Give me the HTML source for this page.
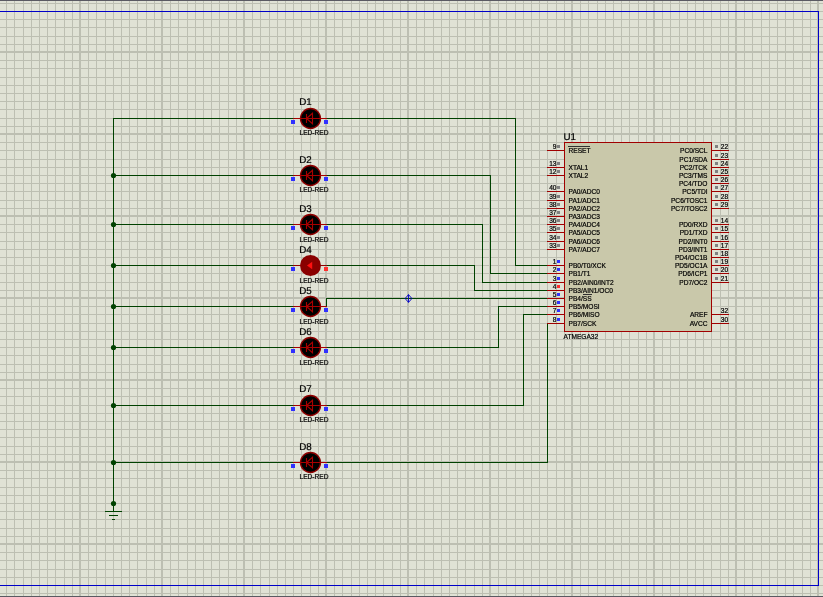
<!DOCTYPE html><html><head><meta charset="utf-8"><style>html,body{margin:0;padding:0;background:#e0e2d5;width:823px;height:597px;overflow:hidden}svg{display:block}text{font-family:"Liberation Sans",sans-serif}svg{will-change:transform}text{stroke:#000;stroke-width:0.2px}</style></head><body>
<svg width="823" height="597" viewBox="0 0 823 597">
<rect x="0" y="0" width="823" height="597" fill="#e0e2d5"/>
<g fill="#bdbfb2" shape-rendering="crispEdges"><rect x="-3" y="0" width="2" height="597"/><rect x="6" y="0" width="1" height="597"/><rect x="14" y="0" width="1" height="597"/><rect x="23" y="0" width="1" height="597"/><rect x="31" y="0" width="1" height="597"/><rect x="39" y="0" width="1" height="597"/><rect x="47" y="0" width="1" height="597"/><rect x="55" y="0" width="1" height="597"/><rect x="64" y="0" width="1" height="597"/><rect x="72" y="0" width="1" height="597"/><rect x="79" y="0" width="2" height="597"/><rect x="88" y="0" width="1" height="597"/><rect x="96" y="0" width="1" height="597"/><rect x="105" y="0" width="1" height="597"/><rect x="113" y="0" width="1" height="597"/><rect x="121" y="0" width="1" height="597"/><rect x="129" y="0" width="1" height="597"/><rect x="137" y="0" width="1" height="597"/><rect x="146" y="0" width="1" height="597"/><rect x="154" y="0" width="1" height="597"/><rect x="161" y="0" width="2" height="597"/><rect x="170" y="0" width="1" height="597"/><rect x="178" y="0" width="1" height="597"/><rect x="187" y="0" width="1" height="597"/><rect x="195" y="0" width="1" height="597"/><rect x="203" y="0" width="1" height="597"/><rect x="211" y="0" width="1" height="597"/><rect x="219" y="0" width="1" height="597"/><rect x="228" y="0" width="1" height="597"/><rect x="236" y="0" width="1" height="597"/><rect x="243" y="0" width="2" height="597"/><rect x="252" y="0" width="1" height="597"/><rect x="260" y="0" width="1" height="597"/><rect x="269" y="0" width="1" height="597"/><rect x="277" y="0" width="1" height="597"/><rect x="285" y="0" width="1" height="597"/><rect x="293" y="0" width="1" height="597"/><rect x="301" y="0" width="1" height="597"/><rect x="310" y="0" width="1" height="597"/><rect x="318" y="0" width="1" height="597"/><rect x="325" y="0" width="2" height="597"/><rect x="334" y="0" width="1" height="597"/><rect x="342" y="0" width="1" height="597"/><rect x="351" y="0" width="1" height="597"/><rect x="359" y="0" width="1" height="597"/><rect x="367" y="0" width="1" height="597"/><rect x="375" y="0" width="1" height="597"/><rect x="383" y="0" width="1" height="597"/><rect x="392" y="0" width="1" height="597"/><rect x="400" y="0" width="1" height="597"/><rect x="407" y="0" width="2" height="597"/><rect x="416" y="0" width="1" height="597"/><rect x="424" y="0" width="1" height="597"/><rect x="433" y="0" width="1" height="597"/><rect x="441" y="0" width="1" height="597"/><rect x="449" y="0" width="1" height="597"/><rect x="457" y="0" width="1" height="597"/><rect x="465" y="0" width="1" height="597"/><rect x="474" y="0" width="1" height="597"/><rect x="482" y="0" width="1" height="597"/><rect x="489" y="0" width="2" height="597"/><rect x="498" y="0" width="1" height="597"/><rect x="506" y="0" width="1" height="597"/><rect x="515" y="0" width="1" height="597"/><rect x="523" y="0" width="1" height="597"/><rect x="531" y="0" width="1" height="597"/><rect x="539" y="0" width="1" height="597"/><rect x="547" y="0" width="1" height="597"/><rect x="556" y="0" width="1" height="597"/><rect x="564" y="0" width="1" height="597"/><rect x="571" y="0" width="2" height="597"/><rect x="580" y="0" width="1" height="597"/><rect x="588" y="0" width="1" height="597"/><rect x="597" y="0" width="1" height="597"/><rect x="605" y="0" width="1" height="597"/><rect x="613" y="0" width="1" height="597"/><rect x="621" y="0" width="1" height="597"/><rect x="629" y="0" width="1" height="597"/><rect x="638" y="0" width="1" height="597"/><rect x="646" y="0" width="1" height="597"/><rect x="653" y="0" width="2" height="597"/><rect x="662" y="0" width="1" height="597"/><rect x="670" y="0" width="1" height="597"/><rect x="679" y="0" width="1" height="597"/><rect x="687" y="0" width="1" height="597"/><rect x="695" y="0" width="1" height="597"/><rect x="703" y="0" width="1" height="597"/><rect x="711" y="0" width="1" height="597"/><rect x="720" y="0" width="1" height="597"/><rect x="728" y="0" width="1" height="597"/><rect x="735" y="0" width="2" height="597"/><rect x="744" y="0" width="1" height="597"/><rect x="752" y="0" width="1" height="597"/><rect x="761" y="0" width="1" height="597"/><rect x="769" y="0" width="1" height="597"/><rect x="777" y="0" width="1" height="597"/><rect x="785" y="0" width="1" height="597"/><rect x="793" y="0" width="1" height="597"/><rect x="802" y="0" width="1" height="597"/><rect x="810" y="0" width="1" height="597"/><rect x="817" y="0" width="2" height="597"/><rect x="826" y="0" width="1" height="597"/><rect x="0" y="-5" width="823" height="1"/><rect x="0" y="3" width="823" height="1"/><rect x="0" y="11" width="823" height="1"/><rect x="0" y="19" width="823" height="1"/><rect x="0" y="27" width="823" height="1"/><rect x="0" y="36" width="823" height="1"/><rect x="0" y="44" width="823" height="1"/><rect x="0" y="51" width="823" height="2"/><rect x="0" y="60" width="823" height="1"/><rect x="0" y="68" width="823" height="1"/><rect x="0" y="77" width="823" height="1"/><rect x="0" y="85" width="823" height="1"/><rect x="0" y="93" width="823" height="1"/><rect x="0" y="101" width="823" height="1"/><rect x="0" y="109" width="823" height="1"/><rect x="0" y="118" width="823" height="1"/><rect x="0" y="126" width="823" height="1"/><rect x="0" y="133" width="823" height="2"/><rect x="0" y="142" width="823" height="1"/><rect x="0" y="150" width="823" height="1"/><rect x="0" y="159" width="823" height="1"/><rect x="0" y="167" width="823" height="1"/><rect x="0" y="175" width="823" height="1"/><rect x="0" y="183" width="823" height="1"/><rect x="0" y="191" width="823" height="1"/><rect x="0" y="200" width="823" height="1"/><rect x="0" y="208" width="823" height="1"/><rect x="0" y="215" width="823" height="2"/><rect x="0" y="224" width="823" height="1"/><rect x="0" y="232" width="823" height="1"/><rect x="0" y="241" width="823" height="1"/><rect x="0" y="249" width="823" height="1"/><rect x="0" y="257" width="823" height="1"/><rect x="0" y="265" width="823" height="1"/><rect x="0" y="273" width="823" height="1"/><rect x="0" y="282" width="823" height="1"/><rect x="0" y="290" width="823" height="1"/><rect x="0" y="297" width="823" height="2"/><rect x="0" y="306" width="823" height="1"/><rect x="0" y="314" width="823" height="1"/><rect x="0" y="323" width="823" height="1"/><rect x="0" y="331" width="823" height="1"/><rect x="0" y="339" width="823" height="1"/><rect x="0" y="347" width="823" height="1"/><rect x="0" y="355" width="823" height="1"/><rect x="0" y="364" width="823" height="1"/><rect x="0" y="372" width="823" height="1"/><rect x="0" y="379" width="823" height="2"/><rect x="0" y="388" width="823" height="1"/><rect x="0" y="396" width="823" height="1"/><rect x="0" y="405" width="823" height="1"/><rect x="0" y="413" width="823" height="1"/><rect x="0" y="421" width="823" height="1"/><rect x="0" y="429" width="823" height="1"/><rect x="0" y="437" width="823" height="1"/><rect x="0" y="446" width="823" height="1"/><rect x="0" y="454" width="823" height="1"/><rect x="0" y="461" width="823" height="2"/><rect x="0" y="470" width="823" height="1"/><rect x="0" y="478" width="823" height="1"/><rect x="0" y="487" width="823" height="1"/><rect x="0" y="495" width="823" height="1"/><rect x="0" y="503" width="823" height="1"/><rect x="0" y="511" width="823" height="1"/><rect x="0" y="519" width="823" height="1"/><rect x="0" y="528" width="823" height="1"/><rect x="0" y="536" width="823" height="1"/><rect x="0" y="543" width="823" height="2"/><rect x="0" y="552" width="823" height="1"/><rect x="0" y="560" width="823" height="1"/><rect x="0" y="569" width="823" height="1"/><rect x="0" y="577" width="823" height="1"/><rect x="0" y="585" width="823" height="1"/><rect x="0" y="593" width="823" height="1"/><rect x="0" y="601" width="823" height="1"/></g>
<g fill="#0000c8" shape-rendering="crispEdges">
<rect x="0" y="11" width="819" height="1"/>
<rect x="0" y="585" width="819" height="1"/>
<rect x="818" y="11" width="1" height="575"/>
</g>
<rect x="0" y="0" width="823" height="1" fill="#5a5a62"/>
<rect x="0" y="596" width="823" height="1" fill="#5a5a62"/>
<g shape-rendering="crispEdges"><rect x="113" y="118" width="1" height="386" fill="#004200"/><rect x="113" y="118" width="181" height="1" fill="#004200"/><rect x="113" y="175" width="181" height="1" fill="#004200"/><rect x="113" y="224" width="181" height="1" fill="#004200"/><rect x="113" y="265" width="181" height="1" fill="#004200"/><rect x="113" y="306" width="181" height="1" fill="#004200"/><rect x="113" y="347" width="181" height="1" fill="#004200"/><rect x="113" y="405" width="181" height="1" fill="#004200"/><rect x="113" y="462" width="181" height="1" fill="#004200"/><rect x="326" y="118" width="190" height="1" fill="#004200"/><rect x="515" y="118" width="1" height="148" fill="#004200"/><rect x="515" y="265" width="33" height="1" fill="#004200"/><rect x="326" y="175" width="165" height="1" fill="#004200"/><rect x="490" y="175" width="1" height="99" fill="#004200"/><rect x="490" y="273" width="58" height="1" fill="#004200"/><rect x="326" y="224" width="157" height="1" fill="#004200"/><rect x="482" y="224" width="1" height="59" fill="#004200"/><rect x="482" y="282" width="66" height="1" fill="#004200"/><rect x="326" y="265" width="149" height="1" fill="#004200"/><rect x="474" y="265" width="1" height="26" fill="#004200"/><rect x="474" y="290" width="74" height="1" fill="#004200"/><rect x="326" y="298" width="1" height="9" fill="#004200"/><rect x="326" y="298" width="222" height="1" fill="#004200"/><rect x="326" y="347" width="173" height="1" fill="#004200"/><rect x="498" y="306" width="1" height="42" fill="#004200"/><rect x="498" y="306" width="50" height="1" fill="#004200"/><rect x="326" y="405" width="198" height="1" fill="#004200"/><rect x="523" y="314" width="1" height="92" fill="#004200"/><rect x="523" y="314" width="25" height="1" fill="#004200"/><rect x="326" y="462" width="222" height="1" fill="#004200"/><rect x="547" y="323" width="1" height="140" fill="#004200"/><rect x="547" y="323" width="1" height="1" fill="#004200"/></g>
<circle cx="113.5" cy="175.5" r="2.6" fill="#004200"/>
<circle cx="113.5" cy="224.5" r="2.6" fill="#004200"/>
<circle cx="113.5" cy="265.5" r="2.6" fill="#004200"/>
<circle cx="113.5" cy="306.5" r="2.6" fill="#004200"/>
<circle cx="113.5" cy="347.5" r="2.6" fill="#004200"/>
<circle cx="113.5" cy="405.5" r="2.6" fill="#004200"/>
<circle cx="113.5" cy="462.5" r="2.6" fill="#004200"/>
<circle cx="113.5" cy="503.5" r="2.6" fill="#004200"/>
<g shape-rendering="crispEdges" fill="#004200">
<rect x="113" y="503" width="1" height="8"/>
<rect x="105" y="511" width="17" height="1"/>
<rect x="109" y="515" width="9" height="1"/>
<rect x="112" y="519" width="3" height="1"/>
</g>
<g fill="none" stroke="#0000c8" stroke-width="0.9"><path d="M408.5 294.6 L411.9 298.5 L408.5 302.4 L405.1 298.5 Z M408.5 294.6 V302.4"/></g>
<rect x="293" y="118" width="34" height="1" fill="#900000" shape-rendering="crispEdges"/>
<circle cx="310.5" cy="118.5" r="10" fill="#000000" stroke="#8e0000" stroke-width="1.3"/>
<path d="M306.5 114.0 V123.0 M306.5 118.5 L312.5 113.3 V123.7 Z M295 118.5 H326" fill="none" stroke="#a80000" stroke-width="1.1"/>
<rect x="291" y="120" width="4" height="4" fill="#3030ff" shape-rendering="crispEdges"/>
<rect x="324" y="120" width="4" height="4" fill="#3030ff" shape-rendering="crispEdges"/>
<text x="299.3" y="105.0" font-size="9.8" text-rendering="geometricPrecision" fill="#000000">D1</text>
<text x="299.5" y="135.0" font-size="6.6" fill="#000000">LED-RED</text>
<rect x="293" y="175" width="34" height="1" fill="#900000" shape-rendering="crispEdges"/>
<circle cx="310.5" cy="175.5" r="10" fill="#000000" stroke="#8e0000" stroke-width="1.3"/>
<path d="M306.5 171.0 V180.0 M306.5 175.5 L312.5 170.3 V180.7 Z M295 175.5 H326" fill="none" stroke="#a80000" stroke-width="1.1"/>
<rect x="291" y="177" width="4" height="4" fill="#3030ff" shape-rendering="crispEdges"/>
<rect x="324" y="177" width="4" height="4" fill="#3030ff" shape-rendering="crispEdges"/>
<text x="299.3" y="163.0" font-size="9.8" text-rendering="geometricPrecision" fill="#000000">D2</text>
<text x="299.5" y="192.0" font-size="6.6" fill="#000000">LED-RED</text>
<rect x="293" y="224" width="34" height="1" fill="#900000" shape-rendering="crispEdges"/>
<circle cx="310.5" cy="224.5" r="10" fill="#000000" stroke="#8e0000" stroke-width="1.3"/>
<path d="M306.5 220.0 V229.0 M306.5 224.5 L312.5 219.3 V229.7 Z M295 224.5 H326" fill="none" stroke="#a80000" stroke-width="1.1"/>
<rect x="291" y="226" width="4" height="4" fill="#3030ff" shape-rendering="crispEdges"/>
<rect x="324" y="226" width="4" height="4" fill="#3030ff" shape-rendering="crispEdges"/>
<text x="299.3" y="212.0" font-size="9.8" text-rendering="geometricPrecision" fill="#000000">D3</text>
<text x="299.5" y="242.0" font-size="6.6" fill="#000000">LED-RED</text>
<rect x="293" y="265" width="34" height="1" fill="#900000" shape-rendering="crispEdges"/>
<circle cx="310.5" cy="265.5" r="10.5" fill="#8a0000"/>
<path d="M307 265.5 L312.2 261.7 L312.2 269.3 Z" fill="#ff1010"/>
<rect x="291" y="267" width="4" height="4" fill="#3030ff" shape-rendering="crispEdges"/>
<rect x="324" y="267" width="4" height="4" fill="#ff3030" shape-rendering="crispEdges"/>
<text x="299.3" y="253.0" font-size="9.8" text-rendering="geometricPrecision" fill="#000000">D4</text>
<text x="299.5" y="283.0" font-size="6.6" fill="#000000">LED-RED</text>
<rect x="293" y="306" width="34" height="1" fill="#900000" shape-rendering="crispEdges"/>
<circle cx="310.5" cy="306.5" r="10" fill="#000000" stroke="#8e0000" stroke-width="1.3"/>
<path d="M306.5 302.0 V311.0 M306.5 306.5 L312.5 301.3 V311.7 Z M295 306.5 H326" fill="none" stroke="#a80000" stroke-width="1.1"/>
<rect x="291" y="308" width="4" height="4" fill="#3030ff" shape-rendering="crispEdges"/>
<rect x="324" y="308" width="4" height="4" fill="#3030ff" shape-rendering="crispEdges"/>
<text x="299.3" y="294.0" font-size="9.8" text-rendering="geometricPrecision" fill="#000000">D5</text>
<text x="299.5" y="324.0" font-size="6.6" fill="#000000">LED-RED</text>
<rect x="293" y="347" width="34" height="1" fill="#900000" shape-rendering="crispEdges"/>
<circle cx="310.5" cy="347.5" r="10" fill="#000000" stroke="#8e0000" stroke-width="1.3"/>
<path d="M306.5 343.0 V352.0 M306.5 347.5 L312.5 342.3 V352.7 Z M295 347.5 H326" fill="none" stroke="#a80000" stroke-width="1.1"/>
<rect x="291" y="349" width="4" height="4" fill="#3030ff" shape-rendering="crispEdges"/>
<rect x="324" y="349" width="4" height="4" fill="#3030ff" shape-rendering="crispEdges"/>
<text x="299.3" y="335.0" font-size="9.8" text-rendering="geometricPrecision" fill="#000000">D6</text>
<text x="299.5" y="365.0" font-size="6.6" fill="#000000">LED-RED</text>
<rect x="293" y="405" width="34" height="1" fill="#900000" shape-rendering="crispEdges"/>
<circle cx="310.5" cy="405.5" r="10" fill="#000000" stroke="#8e0000" stroke-width="1.3"/>
<path d="M306.5 401.0 V410.0 M306.5 405.5 L312.5 400.3 V410.7 Z M295 405.5 H326" fill="none" stroke="#a80000" stroke-width="1.1"/>
<rect x="291" y="407" width="4" height="4" fill="#3030ff" shape-rendering="crispEdges"/>
<rect x="324" y="407" width="4" height="4" fill="#3030ff" shape-rendering="crispEdges"/>
<text x="299.3" y="392.0" font-size="9.8" text-rendering="geometricPrecision" fill="#000000">D7</text>
<text x="299.5" y="422.0" font-size="6.6" fill="#000000">LED-RED</text>
<rect x="293" y="462" width="34" height="1" fill="#900000" shape-rendering="crispEdges"/>
<circle cx="310.5" cy="462.5" r="10" fill="#000000" stroke="#8e0000" stroke-width="1.3"/>
<path d="M306.5 458.0 V467.0 M306.5 462.5 L312.5 457.3 V467.7 Z M295 462.5 H326" fill="none" stroke="#a80000" stroke-width="1.1"/>
<rect x="291" y="464" width="4" height="4" fill="#3030ff" shape-rendering="crispEdges"/>
<rect x="324" y="464" width="4" height="4" fill="#3030ff" shape-rendering="crispEdges"/>
<text x="299.3" y="450.0" font-size="9.8" text-rendering="geometricPrecision" fill="#000000">D8</text>
<text x="299.5" y="479.0" font-size="6.6" fill="#000000">LED-RED</text>
<rect x="564.5" y="142.5" width="147" height="189" fill="#c9c8aa" stroke="#a00000" stroke-width="1"/>
<text x="563.5" y="140" font-size="9.8" text-rendering="geometricPrecision" fill="#000000">U1</text>
<text x="563.5" y="338.5" font-size="6.6" fill="#000000">ATMEGA32</text>
<g shape-rendering="crispEdges"><rect x="547" y="150" width="17" height="1" fill="#a00000"/><rect x="557" y="145" width="3" height="3" fill="#808080"/><text x="556.5" y="149.0" font-size="6.6" text-anchor="end" fill="#000000">9</text><text x="568.5" y="152.5" font-size="6.6" fill="#000000">RESET</text><rect x="547" y="167" width="17" height="1" fill="#a00000"/><rect x="557" y="162" width="3" height="3" fill="#808080"/><text x="556.5" y="166.0" font-size="6.6" text-anchor="end" fill="#000000">13</text><text x="568.5" y="169.5" font-size="6.6" fill="#000000">XTAL1</text><rect x="547" y="175" width="17" height="1" fill="#a00000"/><rect x="557" y="170" width="3" height="3" fill="#808080"/><text x="556.5" y="174.0" font-size="6.6" text-anchor="end" fill="#000000">12</text><text x="568.5" y="177.5" font-size="6.6" fill="#000000">XTAL2</text><rect x="547" y="191" width="17" height="1" fill="#a00000"/><rect x="557" y="186" width="3" height="3" fill="#808080"/><text x="556.5" y="190.0" font-size="6.6" text-anchor="end" fill="#000000">40</text><text x="568.5" y="193.5" font-size="6.6" fill="#000000">PA0/ADC0</text><rect x="547" y="200" width="17" height="1" fill="#a00000"/><rect x="557" y="195" width="3" height="3" fill="#808080"/><text x="556.5" y="199.0" font-size="6.6" text-anchor="end" fill="#000000">39</text><text x="568.5" y="202.5" font-size="6.6" fill="#000000">PA1/ADC1</text><rect x="547" y="208" width="17" height="1" fill="#a00000"/><rect x="557" y="203" width="3" height="3" fill="#808080"/><text x="556.5" y="207.0" font-size="6.6" text-anchor="end" fill="#000000">38</text><text x="568.5" y="210.5" font-size="6.6" fill="#000000">PA2/ADC2</text><rect x="547" y="216" width="17" height="1" fill="#a00000"/><rect x="557" y="211" width="3" height="3" fill="#808080"/><text x="556.5" y="215.0" font-size="6.6" text-anchor="end" fill="#000000">37</text><text x="568.5" y="218.5" font-size="6.6" fill="#000000">PA3/ADC3</text><rect x="547" y="224" width="17" height="1" fill="#a00000"/><rect x="557" y="219" width="3" height="3" fill="#808080"/><text x="556.5" y="223.0" font-size="6.6" text-anchor="end" fill="#000000">36</text><text x="568.5" y="226.5" font-size="6.6" fill="#000000">PA4/ADC4</text><rect x="547" y="232" width="17" height="1" fill="#a00000"/><rect x="557" y="227" width="3" height="3" fill="#808080"/><text x="556.5" y="231.0" font-size="6.6" text-anchor="end" fill="#000000">35</text><text x="568.5" y="234.5" font-size="6.6" fill="#000000">PA5/ADC5</text><rect x="547" y="241" width="17" height="1" fill="#a00000"/><rect x="557" y="236" width="3" height="3" fill="#808080"/><text x="556.5" y="240.0" font-size="6.6" text-anchor="end" fill="#000000">34</text><text x="568.5" y="243.5" font-size="6.6" fill="#000000">PA6/ADC6</text><rect x="547" y="249" width="17" height="1" fill="#a00000"/><rect x="557" y="244" width="3" height="3" fill="#808080"/><text x="556.5" y="248.0" font-size="6.6" text-anchor="end" fill="#000000">33</text><text x="568.5" y="251.5" font-size="6.6" fill="#000000">PA7/ADC7</text><rect x="547" y="265" width="17" height="1" fill="#a00000"/><rect x="557" y="260" width="3" height="3" fill="#3030ff"/><text x="556.5" y="264.0" font-size="6.6" text-anchor="end" fill="#000000">1</text><text x="568.5" y="267.5" font-size="6.6" fill="#000000">PB0/T0/XCK</text><rect x="547" y="273" width="17" height="1" fill="#a00000"/><rect x="557" y="268" width="3" height="3" fill="#3030ff"/><text x="556.5" y="272.0" font-size="6.6" text-anchor="end" fill="#000000">2</text><text x="568.5" y="275.5" font-size="6.6" fill="#000000">PB1/T1</text><rect x="547" y="282" width="17" height="1" fill="#a00000"/><rect x="557" y="277" width="3" height="3" fill="#3030ff"/><text x="556.5" y="281.0" font-size="6.6" text-anchor="end" fill="#000000">3</text><text x="568.5" y="284.5" font-size="6.6" fill="#000000">PB2/AIN0/INT2</text><rect x="547" y="290" width="17" height="1" fill="#a00000"/><rect x="557" y="285" width="3" height="3" fill="#ff3030"/><text x="556.5" y="289.0" font-size="6.6" text-anchor="end" fill="#000000">4</text><text x="568.5" y="292.5" font-size="6.6" fill="#000000">PB3/AIN1/OC0</text><rect x="547" y="298" width="17" height="1" fill="#a00000"/><rect x="557" y="293" width="3" height="3" fill="#3030ff"/><text x="556.5" y="297.0" font-size="6.6" text-anchor="end" fill="#000000">5</text><text x="568.5" y="300.5" font-size="6.6" fill="#000000">PB4/SS</text><rect x="547" y="306" width="17" height="1" fill="#a00000"/><rect x="557" y="301" width="3" height="3" fill="#3030ff"/><text x="556.5" y="305.0" font-size="6.6" text-anchor="end" fill="#000000">6</text><text x="568.5" y="308.5" font-size="6.6" fill="#000000">PB5/MOSI</text><rect x="547" y="314" width="17" height="1" fill="#a00000"/><rect x="557" y="309" width="3" height="3" fill="#3030ff"/><text x="556.5" y="313.0" font-size="6.6" text-anchor="end" fill="#000000">7</text><text x="568.5" y="316.5" font-size="6.6" fill="#000000">PB6/MISO</text><rect x="547" y="323" width="17" height="1" fill="#a00000"/><rect x="557" y="318" width="3" height="3" fill="#3030ff"/><text x="556.5" y="322.0" font-size="6.6" text-anchor="end" fill="#000000">8</text><text x="568.5" y="325.5" font-size="6.6" fill="#000000">PB7/SCK</text><rect x="712" y="150" width="17" height="1" fill="#a00000"/><rect x="715" y="145" width="3" height="3" fill="#808080"/><text x="720.8" y="149.0" font-size="6.6" fill="#000000">22</text><text x="707.5" y="152.5" font-size="6.6" text-anchor="end" fill="#000000">PC0/SCL</text><rect x="712" y="159" width="17" height="1" fill="#a00000"/><rect x="715" y="154" width="3" height="3" fill="#808080"/><text x="720.8" y="158.0" font-size="6.6" fill="#000000">23</text><text x="707.5" y="161.5" font-size="6.6" text-anchor="end" fill="#000000">PC1/SDA</text><rect x="712" y="167" width="17" height="1" fill="#a00000"/><rect x="715" y="162" width="3" height="3" fill="#808080"/><text x="720.8" y="166.0" font-size="6.6" fill="#000000">24</text><text x="707.5" y="169.5" font-size="6.6" text-anchor="end" fill="#000000">PC2/TCK</text><rect x="712" y="175" width="17" height="1" fill="#a00000"/><rect x="715" y="170" width="3" height="3" fill="#808080"/><text x="720.8" y="174.0" font-size="6.6" fill="#000000">25</text><text x="707.5" y="177.5" font-size="6.6" text-anchor="end" fill="#000000">PC3/TMS</text><rect x="712" y="183" width="17" height="1" fill="#a00000"/><rect x="715" y="178" width="3" height="3" fill="#808080"/><text x="720.8" y="182.0" font-size="6.6" fill="#000000">26</text><text x="707.5" y="185.5" font-size="6.6" text-anchor="end" fill="#000000">PC4/TDO</text><rect x="712" y="191" width="17" height="1" fill="#a00000"/><rect x="715" y="186" width="3" height="3" fill="#808080"/><text x="720.8" y="190.0" font-size="6.6" fill="#000000">27</text><text x="707.5" y="193.5" font-size="6.6" text-anchor="end" fill="#000000">PC5/TDI</text><rect x="712" y="200" width="17" height="1" fill="#a00000"/><rect x="715" y="195" width="3" height="3" fill="#808080"/><text x="720.8" y="199.0" font-size="6.6" fill="#000000">28</text><text x="707.5" y="202.5" font-size="6.6" text-anchor="end" fill="#000000">PC6/TOSC1</text><rect x="712" y="208" width="17" height="1" fill="#a00000"/><rect x="715" y="203" width="3" height="3" fill="#808080"/><text x="720.8" y="207.0" font-size="6.6" fill="#000000">29</text><text x="707.5" y="210.5" font-size="6.6" text-anchor="end" fill="#000000">PC7/TOSC2</text><rect x="712" y="224" width="17" height="1" fill="#a00000"/><rect x="715" y="219" width="3" height="3" fill="#808080"/><text x="720.8" y="223.0" font-size="6.6" fill="#000000">14</text><text x="707.5" y="226.5" font-size="6.6" text-anchor="end" fill="#000000">PD0/RXD</text><rect x="712" y="232" width="17" height="1" fill="#a00000"/><rect x="715" y="227" width="3" height="3" fill="#808080"/><text x="720.8" y="231.0" font-size="6.6" fill="#000000">15</text><text x="707.5" y="234.5" font-size="6.6" text-anchor="end" fill="#000000">PD1/TXD</text><rect x="712" y="241" width="17" height="1" fill="#a00000"/><rect x="715" y="236" width="3" height="3" fill="#808080"/><text x="720.8" y="240.0" font-size="6.6" fill="#000000">16</text><text x="707.5" y="243.5" font-size="6.6" text-anchor="end" fill="#000000">PD2/INT0</text><rect x="712" y="249" width="17" height="1" fill="#a00000"/><rect x="715" y="244" width="3" height="3" fill="#808080"/><text x="720.8" y="248.0" font-size="6.6" fill="#000000">17</text><text x="707.5" y="251.5" font-size="6.6" text-anchor="end" fill="#000000">PD3/INT1</text><rect x="712" y="257" width="17" height="1" fill="#a00000"/><rect x="715" y="252" width="3" height="3" fill="#808080"/><text x="720.8" y="256.0" font-size="6.6" fill="#000000">18</text><text x="707.5" y="259.5" font-size="6.6" text-anchor="end" fill="#000000">PD4/OC1B</text><rect x="712" y="265" width="17" height="1" fill="#a00000"/><rect x="715" y="260" width="3" height="3" fill="#808080"/><text x="720.8" y="264.0" font-size="6.6" fill="#000000">19</text><text x="707.5" y="267.5" font-size="6.6" text-anchor="end" fill="#000000">PD5/OC1A</text><rect x="712" y="273" width="17" height="1" fill="#a00000"/><rect x="715" y="268" width="3" height="3" fill="#808080"/><text x="720.8" y="272.0" font-size="6.6" fill="#000000">20</text><text x="707.5" y="275.5" font-size="6.6" text-anchor="end" fill="#000000">PD6/ICP1</text><rect x="712" y="282" width="17" height="1" fill="#a00000"/><rect x="715" y="277" width="3" height="3" fill="#808080"/><text x="720.8" y="281.0" font-size="6.6" fill="#000000">21</text><text x="707.5" y="284.5" font-size="6.6" text-anchor="end" fill="#000000">PD7/OC2</text><rect x="712" y="314" width="17" height="1" fill="#a00000"/><text x="720.8" y="313.0" font-size="6.6" fill="#000000">32</text><text x="707.5" y="316.5" font-size="6.6" text-anchor="end" fill="#000000">AREF</text><rect x="712" y="323" width="17" height="1" fill="#a00000"/><text x="720.8" y="322.0" font-size="6.6" fill="#000000">30</text><text x="707.5" y="325.5" font-size="6.6" text-anchor="end" fill="#000000">AVCC</text></g>
<rect x="568" y="146" width="22" height="1" fill="#303030"/>
<rect x="583" y="294" width="9" height="1" fill="#303030"/>
</svg></body></html>
